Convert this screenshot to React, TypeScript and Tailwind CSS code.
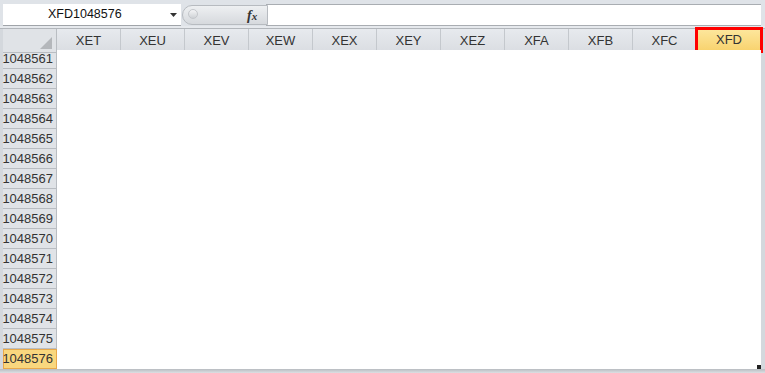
import React from "react";

const cols = ["XET","XEU","XEV","XEW","XEX","XEY","XEZ","XFA","XFB","XFC","XFD"];
const rows = Array.from({ length: 16 }, (_, i) => 1048561 + i);

export default function App() {
  return (
    <div className="w-[765px] h-[373px] bg-[#d4d8dd] overflow-hidden flex flex-col" style={{ fontFamily: '"Liberation Sans", Arial, sans-serif' }}>
      {/* formula bar */}
      <div className="h-[4px] bg-[#dfe3e8] shrink-0" />
      <div className="flex h-[22px] shrink-0 pl-[3px] pr-[4px] bg-[#dfe3e8]">
        <div className="w-[178px] bg-white border-b border-[#a0a4a9] flex items-center relative">
          <span className="absolute left-[45px] top-[3px] text-[12.5px] text-[#111] leading-[15px]">XFD1048576</span>
          <svg className="absolute left-[167px] top-[9px]" width="8" height="5" viewBox="0 0 8 5"><path d="M0 0h7L3.5 4z" fill="#333" /></svg>
        </div>
        <div className="w-[85px] relative bg-[#dfe3e8]">
          <div className="absolute left-[1px] top-[1px] right-[-2px] bottom-[1px] rounded-l-[11px] border border-[#b7bbc0] bg-gradient-to-b from-[#eef0f2] to-[#d6d9dd]" />
          <div className="absolute left-[7px] top-[5px] w-[10px] h-[10px] rounded-full bg-gradient-to-b from-[#f4f5f6] to-[#cfd2d6] border border-[#c4c7cb]" />
          <span className="absolute left-[66px] top-[1px] text-[14px] italic font-bold text-[#333]" style={{ fontFamily: '"Liberation Serif", "Times New Roman", serif' }}>f<span className="text-[11px]">x</span></span>
        </div>
        <div className="flex-1 bg-white border border-[#a9adb2] border-r-0" />
      </div>
      <div className="h-[3px] bg-[#e6e9ed] shrink-0 border-b border-[#b2b6bb]" />
      {/* grid */}
      <div className="flex-1 flex flex-col pl-[3px] pr-[4px]">
        <div className="grid grid-cols-[54px_repeat(11,64px)] h-[21px] shrink-0">
          <div className="bg-[#e0e3e7] border-r border-b border-[#b9bdc2] relative">
            <svg className="absolute right-[4px] bottom-[3px]" width="12" height="12" viewBox="0 0 12 12"><path d="M12 0V12H0z" fill="#b4b7bb" /></svg>
          </div>
          {cols.map((c) =>
            c === "XFD" ? (
              <div key={c} className="bg-gradient-to-b from-[#fde69b] to-[#f8d36f] border-[3px] border-[#ff0000] flex items-center justify-center text-[13px] text-[#333] -mt-[2px] -mr-[2px] -ml-[2px]">
                {c}
              </div>
            ) : (
              <div key={c} className="bg-gradient-to-b from-[#e7eaee] to-[#dadde2] border-r border-b border-[#c4c8cd] flex items-center justify-center text-[13px] text-[#333]">
                {c}
              </div>
            )
          )}
        </div>
        <div className="flex flex-1">
          <div className="w-[54px] flex flex-col shrink-0">
            {rows.map((r, i) =>
              i === 15 ? (
                <div key={r} className="h-[20px] bg-[#f9d77e] border border-[#e9a94a] flex items-center justify-end pr-[3px] text-[13px] text-[#333]">{r}</div>
              ) : (
                <div key={r} className={`${i === 0 ? "h-[19px]" : "h-[20px]"} bg-[#e0e3e7] border-r border-b border-[#b9bdc2] flex items-center justify-end pr-[3px] text-[13px] text-[#333]`}>{r}</div>
              )
            )}
          </div>
          <div className="flex-1 bg-white relative">
            <div className="absolute right-[0px] bottom-[0px] w-[4px] h-[4px] bg-[#222]" />
          </div>
        </div>
      </div>
      <div className="h-[4px] bg-gradient-to-b from-[#b8bcc1] to-[#dcdfe3] shrink-0" />
    </div>
  );
}
